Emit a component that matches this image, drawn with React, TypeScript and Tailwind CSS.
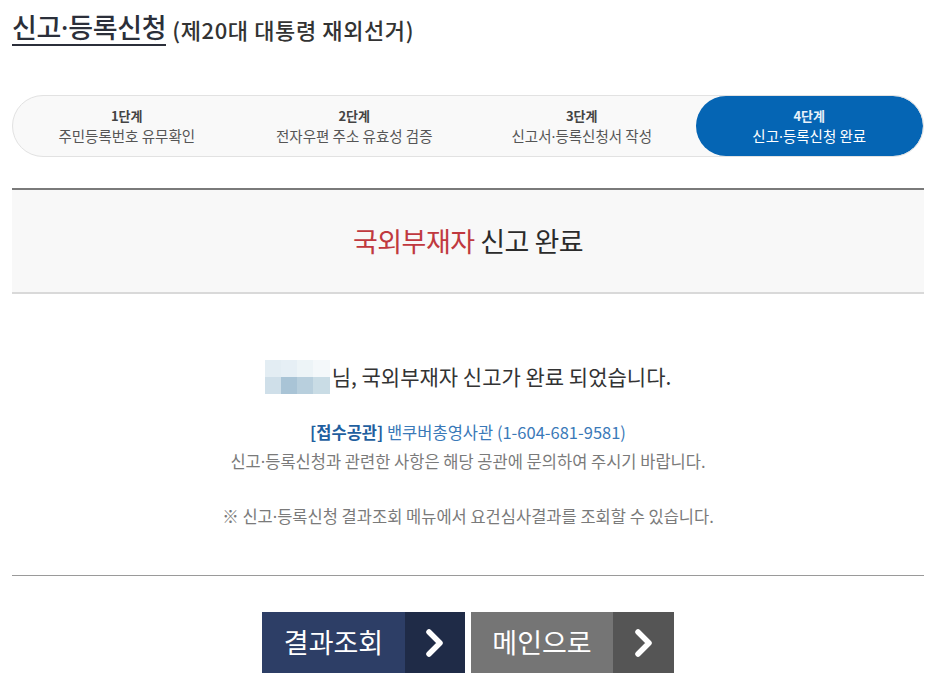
import React from 'react';

const steps = [
  { no: '1단계', label: '주민등록번호 유무확인' },
  { no: '2단계', label: '전자우편 주소 유효성 검증' },
  { no: '3단계', label: '신고서·등록신청서 작성' },
  { no: '4단계', label: '신고·등록신청 완료' },
];

// 이름 가림용 모자이크
const mosaic = [
  '#e3edf3', '#e6eff5', '#edf4f7', '#f4f8fa',
  '#cfdfe9', '#a9c4d6', '#b8cfdd', '#c9dce5',
];

const Dot = () => <span style={{ fontFamily: '"Noto Sans", sans-serif' }}>·</span>;

function Label({ text }: { text: string }) {
  const parts = text.split('·');
  return (
    <>
      {parts.map((p, i) => (
        <React.Fragment key={i}>
          {i > 0 && <Dot />}
          {p}
        </React.Fragment>
      ))}
    </>
  );
}

function Chevron() {
  return (
    <svg width="22" height="30" viewBox="0 0 22 30" fill="none">
      <path d="M5 4 L16 15 L5 26" stroke="white" strokeWidth="5.5" strokeLinecap="round" strokeLinejoin="round" />
    </svg>
  );
}

export default function App() {
  return (
    <div
      className="w-[936px] h-[689px] bg-white px-3 overflow-hidden text-[#333]"
      style={{ fontFamily: '"Noto Sans CJK KR", "Noto Sans", sans-serif' }}
    >
      {/* 제목 */}
      <h1 className="h-[46px] flex items-end gap-[6px] leading-none">
        <span className="text-[27px] font-medium text-[#2b2f3a] border-b-2 border-[#2b2f3a] pb-[3px] tracking-[-0.3px]">
          신고<Dot />등록신청
        </span>
        <span className="text-[22px] font-medium text-[#333] pb-[6px] tracking-[0.6px]">(제20대 대통령 재외선거)</span>
      </h1>

      {/* 단계 */}
      <div className="mt-[49px] h-[62px] flex rounded-full border border-[#e2e2e2] bg-[#f9f9f9] overflow-hidden">
        {steps.map((s, i) => {
          const active = i === 3;
          return (
            <div
              key={s.no}
              className={`flex-1 flex flex-col items-center justify-center leading-[20px] ${
                active ? 'bg-[#0565b4] rounded-full text-white' : 'text-[#333]'
              }`}
            >
              <span className={`text-[13px] font-bold ${active ? 'text-[#e8f1fa]' : 'text-[#444]'}`}>{s.no}</span>
              <span className={`text-[14.5px] ${active ? 'text-white' : 'text-[#555]'}`}>
                <Label text={s.label} />
              </span>
            </div>
          );
        })}
      </div>

      {/* 완료 헤더 */}
      <div className="mt-[31px] border-t-2 border-[#7a7a7a] border-b-2 border-b-[#d9d9d9] bg-[#f8f8f8] h-[106px] flex items-center justify-center">
        <h2 className="text-[27px] font-normal tracking-[-0.5px]">
          <span className="text-[#c0393f]">국외부재자</span> <span className="text-[#2b2b2b]">신고 완료</span>
        </h2>
      </div>

      {/* 본문 */}
      <div className="h-[282px] border-b border-[#9a9a9a] flex flex-col items-center">
        <div className="mt-[66px] flex items-center">
          <div className="grid grid-cols-4 w-[65px] h-[34px] mr-[2px]">
            {mosaic.map((c, i) => (
              <div key={i} style={{ backgroundColor: c }} />
            ))}
          </div>
          <p className="text-[21px] text-[#333]">님, 국외부재자 신고가 완료 되었습니다.</p>
        </div>

        <p className="mt-[26px] text-[16.5px] leading-[24px] text-[#3a79b8]">
          <span className="font-bold text-[#1f5f9f]">[접수공관]</span> 밴쿠버총영사관 (1-604-681-9581)
        </p>
        <p className="mt-[5px] text-[16.5px] leading-[24px] text-[#7a7a7a]">
          신고<Dot />등록신청과 관련한 사항은 해당 공관에 문의하여 주시기 바랍니다.
        </p>
        <p className="mt-[30px] text-[16.5px] leading-[24px] text-[#7a7a7a]">
          ※ 신고<Dot />등록신청 결과조회 메뉴에서 요건심사결과를 조회할 수 있습니다.
        </p>
      </div>

      {/* 버튼 */}
      <div className="mt-[36px] flex justify-center gap-[6px]">
        <button className="flex h-[61px] w-[203px]">
          <span className="flex-1 bg-[#2d3e66] text-white text-[27px] flex items-center justify-center">결과조회</span>
          <span className="w-[60px] bg-[#1f2b47] flex items-center justify-center">
            <Chevron />
          </span>
        </button>
        <button className="flex h-[61px] w-[203px]">
          <span className="flex-1 bg-[#757575] text-white text-[27px] flex items-center justify-center">메인으로</span>
          <span className="w-[61px] bg-[#555555] flex items-center justify-center">
            <Chevron />
          </span>
        </button>
      </div>
    </div>
  );
}
